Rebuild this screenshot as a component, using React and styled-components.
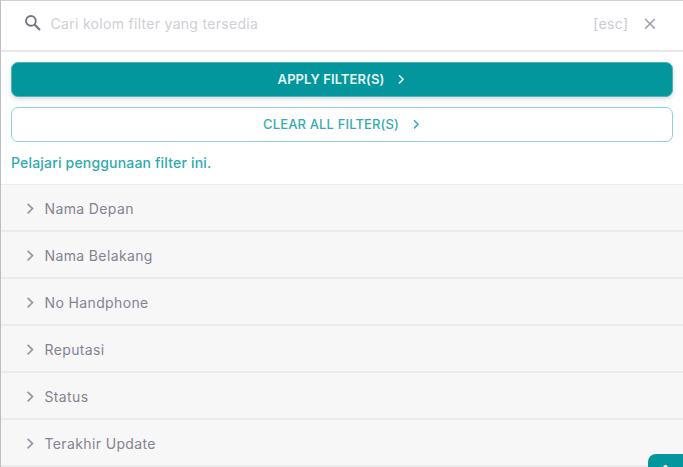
import React from "react";
import styled, { createGlobalStyle } from "styled-components";

const GlobalStyle = createGlobalStyle`
  * { box-sizing: border-box; }
  body { margin: 0; overflow: hidden; background: #fff; }
`;

const Panel = styled.main`
  position: relative;
  display: flex;
  flex-direction: column;
  width: 683px;
  height: 467px;
  overflow: hidden;
  border-top: 1px solid #cfcfcf;
  border-left: 1px solid #bdbdc3;
  background: #fff;
  font-family: Inter, "Liberation Sans", sans-serif;
`;

const SearchBar = styled.header`
  display: flex;
  align-items: center;
  flex: 0 0 51px;
  padding: 0 25px 3px 23px;
  border-bottom: 2px solid #e8e8ea;
`;

const SearchIcon = styled.svg`
  flex: none;
  margin-top: -2px;
`;

const SearchInput = styled.input`
  flex: 1;
  min-width: 0;
  margin-left: 8.5px;
  padding: 0;
  border: 0;
  outline: 0;
  background: transparent;
  font: 400 14px/20px Inter, sans-serif;
  letter-spacing: 0.3px;
  color: #7e7c8c;
  &::placeholder { color: #cfced6; opacity: 1; }
`;

const EscHint = styled.span`
  font-size: 14px;
  line-height: 20px;
  letter-spacing: 0.35px;
  color: #cac9d1;
`;

const CloseButton = styled.button`
  display: flex;
  margin-left: 13.5px;
  padding: 0;
  border: 0;
  background: none;
`;

const Actions = styled.section`
  display: flex;
  flex-direction: column;
  flex: 0 0 132px;
  gap: 10px;
  padding: 10px 10px 0;
`;

const ActionButton = styled.button`
  display: flex;
  align-items: center;
  justify-content: center;
  gap: 12px;
  height: 35px;
  flex: none;
  padding: 0 0 1px;
  border-radius: 7px;
  border: ${(p) => (p.$primary ? "1px solid #4db5b9" : "1px solid #8fd2d5")};
  background: ${(p) => (p.$primary ? "#03969c" : "#fff")};
  color: ${(p) => (p.$primary ? "#e8f7f7" : "#36abb0")};
  box-shadow: ${(p) => (p.$primary ? "0 2px 5px rgba(0, 0, 0, 0.16)" : "none")};
  font: ${(p) => (p.$primary ? 600 : 500)} 13px/20px Inter, sans-serif;
  letter-spacing: ${(p) => (p.$primary ? "0.07px" : "0.14px")};
`;

const HelpLink = styled.a`
  margin-top: 1px;
  font-size: 14px;
  font-weight: 500;
  line-height: 20px;
  letter-spacing: 0.18px;
  color: #30aaae;
`;

const FilterList = styled.ul`
  flex: none;
  margin: 0;
  padding: 0;
  list-style: none;
  border-top: 1px solid #ebebed;
  background: #f7f7f7;
`;

const FilterRow = styled.li`
  display: flex;
  align-items: center;
  gap: 8.5px;
  height: 47px;
  padding: 2px 0 0 23px;
  border-bottom: 2px solid #ebebec;
  font-size: 14px;
  letter-spacing: 0.37px;
  color: #858391;
`;

const HelpTab = styled.div`
  position: absolute;
  left: 647px;
  top: 453px;
  width: 50px;
  height: 30px;
  border-radius: 8px;
  background: #03969c;
  svg { position: absolute; left: 12px; top: 9px; }
`;

const RowChevron = () => (
  <svg width="12" height="12" viewBox="0 0 12 12" fill="none" stroke="#9997a4" strokeWidth="1.7">
    <path d="M3.6 0.9 L8.5 5.6 L3.6 10.3" />
  </svg>
);

const ButtonChevron = () => (
  <svg width="10" height="10" viewBox="0 0 10 10" fill="none" stroke="currentColor" strokeWidth="1.5">
    <path d="M3 1.2 L7.1 5.3 L3 9.4" />
  </svg>
);

const filters = ["Nama Depan", "Nama Belakang", "No Handphone", "Reputasi", "Status", "Terakhir Update"];

export default function App() {
  return (
    <>
      <GlobalStyle />
      <Panel>
        <SearchBar>
          <SearchIcon width="18" height="18" viewBox="0 0 18 18" fill="none" stroke="#777584">
            <circle cx="6.9" cy="6.9" r="4.9" strokeWidth="1.9" />
            <path d="M10.5 10.5 L16 16" strokeWidth="2.2" />
          </SearchIcon>
          <SearchInput placeholder="Cari kolom filter yang tersedia" />
          <EscHint>[esc]</EscHint>
          <CloseButton aria-label="Tutup">
            <svg width="16" height="16" viewBox="0 0 16 16" fill="none" stroke="#a3a2ac" strokeWidth="1.6">
              <path d="M3.2 3 L12.8 12.6 M12.8 3 L3.2 12.6" />
            </svg>
          </CloseButton>
        </SearchBar>
        <Actions>
          <ActionButton $primary>
            APPLY FILTER(S)
            <ButtonChevron />
          </ActionButton>
          <ActionButton>
            CLEAR ALL FILTER(S)
            <ButtonChevron />
          </ActionButton>
          <HelpLink>Pelajari penggunaan filter ini.</HelpLink>
        </Actions>
        <FilterList>
          {filters.map((name) => (
            <FilterRow key={name}>
              <RowChevron />
              {name}
            </FilterRow>
          ))}
        </FilterList>
        <HelpTab>
          <svg width="12" height="12" viewBox="0 0 12 12" fill="#e8f7f7">
            <circle cx="5.5" cy="4.2" r="2.3" />
          </svg>
        </HelpTab>
      </Panel>
    </>
  );
}
